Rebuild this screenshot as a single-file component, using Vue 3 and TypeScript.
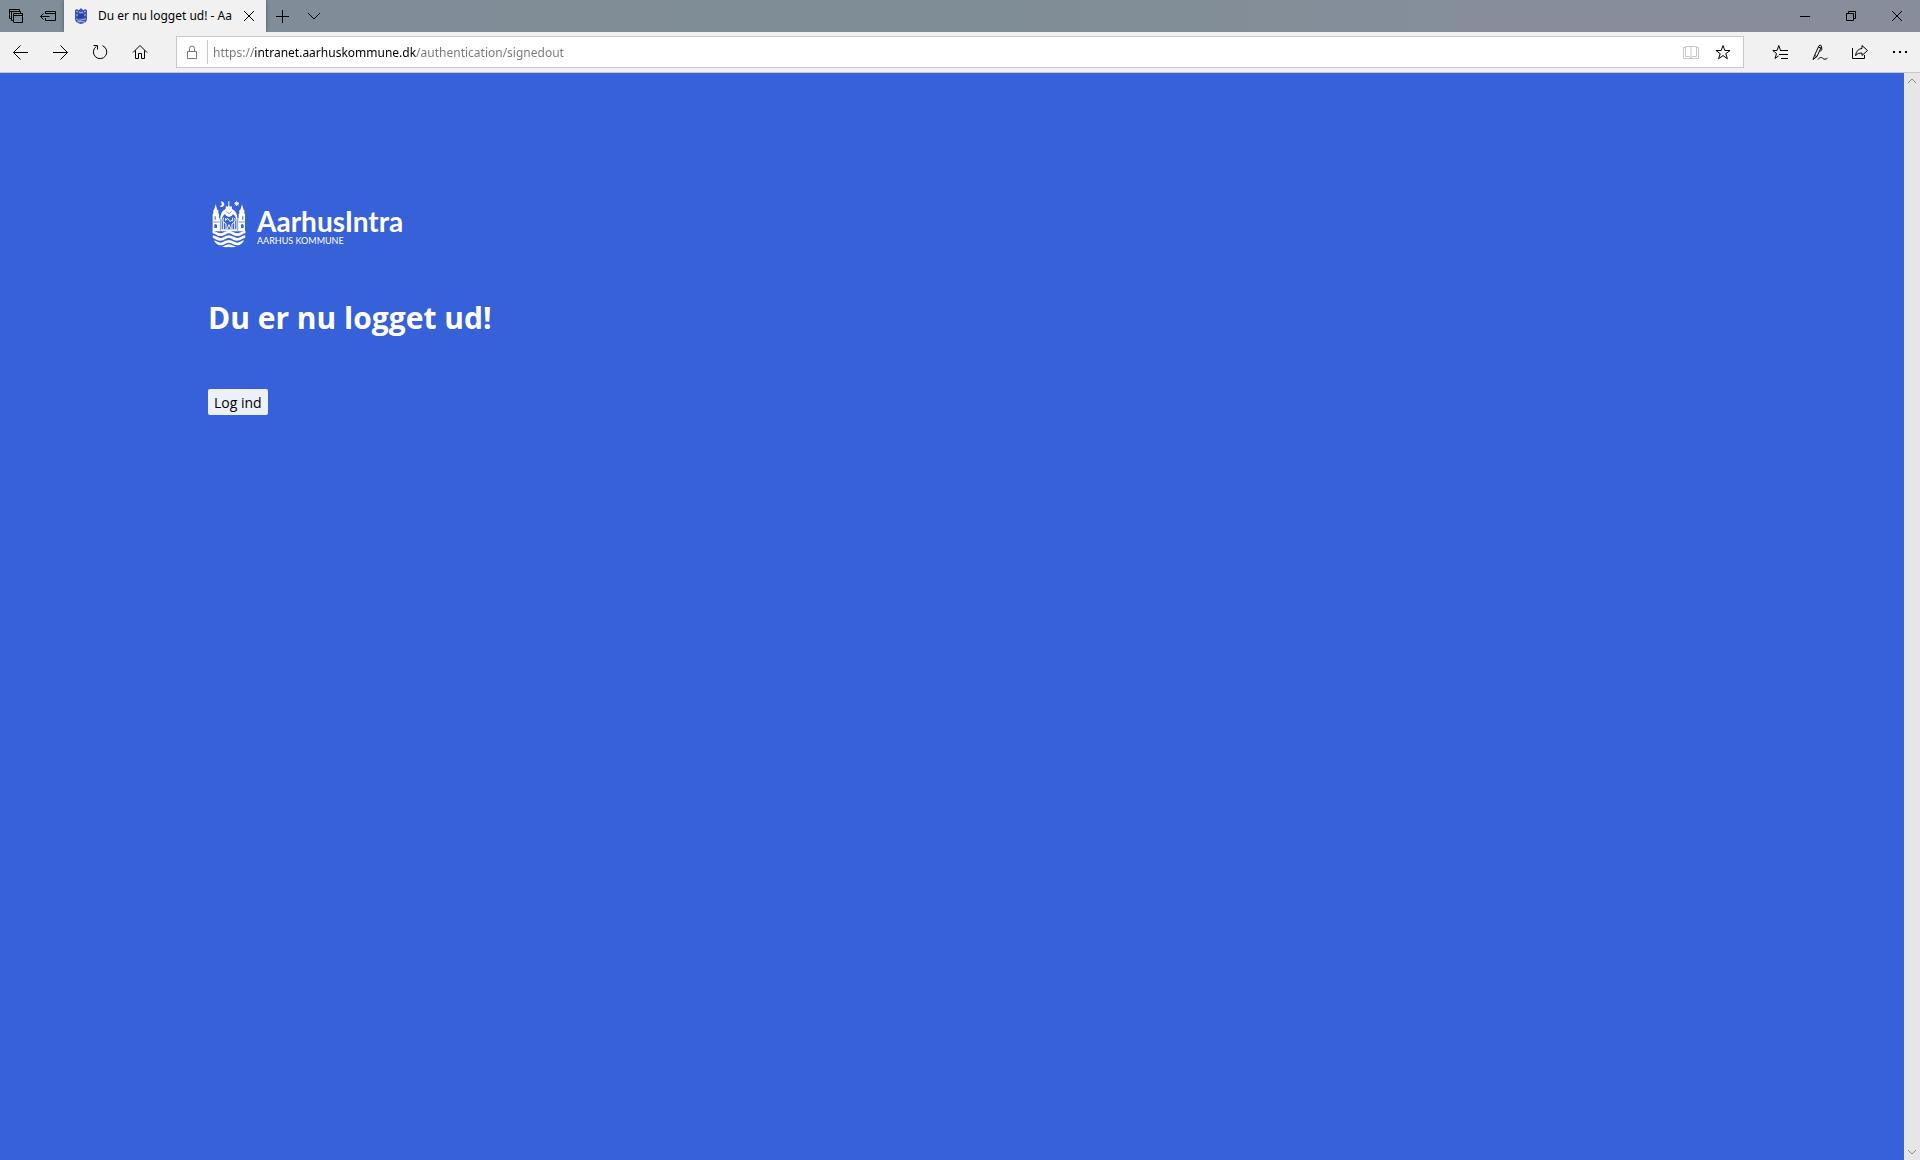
<script setup lang="ts">
import { ref } from 'vue'

const address = ref('https://intranet.aarhuskommune.dk/authentication/signedout')
const tabTitle = 'Du er nu logget ud! - AarhusIntra'
</script>

<template>
  <div class="browser">
    <header class="titlebar">
      <button class="tool" aria-label="Tabs you've set aside">
        <svg width="16" height="16" viewBox="0 0 16 16">
          <path d="M3.500 10.500h-2v-9h10v2M1.500 3.500h10M5.500 12.500h-2v-9h9v2" />
          <path d="M5.500 5.500h9v9h-9zM5.500 7.500h9" />
        </svg>
      </button>
      <button class="tool" aria-label="Set these tabs aside">
        <svg width="16" height="16" viewBox="0 0 16 16">
          <path d="M5.500 6V3.500h10v9h-10V10M5.500 5.500h10M.5 8.500h9M3.500 5.500l-3 3 3 3" />
        </svg>
      </button>
      <div class="tab">
        <svg class="favicon" width="14" height="16" viewBox="0 0 14 16">
          <path d="M1 2l2-1 1 1h1l2-2 2 2h1l1-1 2 1v9q0 4-6 5-6-1-6-5z" fill="#3b55b5" />
          <path d="M2 3l2 1M10 4l2-1M5 4l2 1 2-1M2 7h2M10 7h2M2 11q2 2 5 1t5-1M3 14q4-1 8 0" stroke="#aebbe6" />
          <path d="M4 6h6v4H4z" fill="#2741a2" />
        </svg>
        <span class="tab-title">{{ tabTitle }}</span>
        <button class="tab-close" aria-label="Close tab">
          <svg width="12" height="12" viewBox="0 0 12 12"><path d="M1 1l10 10M11 1L1 11" /></svg>
        </button>
      </div>
      <button class="tool" aria-label="New tab">
        <svg width="14" height="14" viewBox="0 0 14 14"><path d="M7.500 1v13M1 7.500h13" /></svg>
      </button>
      <button class="tool" aria-label="Show tab previews">
        <svg width="14" height="14" viewBox="0 0 14 14"><path d="M1 4l6 6 6-6" /></svg>
      </button>
      <div class="window-controls">
        <button aria-label="Minimize">
          <svg width="10" height="10" viewBox="0 0 10 10"><path d="M0 5.500h10" /></svg>
        </button>
        <button aria-label="Restore">
          <svg width="10" height="10" viewBox="0 0 10 10"><path d="M.5 2.500h7v7h-7zM2.500 2.500v-2h7v7h-2" /></svg>
        </button>
        <button aria-label="Close">
          <svg width="10" height="10" viewBox="0 0 10 10"><path d="M0 0l10 10M10 0L0 10" /></svg>
        </button>
      </div>
    </header>

    <nav class="toolbar" aria-label="Browser">
      <button class="nav" aria-label="Back">
        <svg width="16" height="16" viewBox="0 0 16 16"><path d="M1.500 8.500H16M8.500 1.500l-7 7 7 7" /></svg>
      </button>
      <button class="nav" aria-label="Forward">
        <svg width="16" height="16" viewBox="0 0 16 16"><path d="M1 8.500h14.500M8.500 1.500l7 7-7 7" /></svg>
      </button>
      <button class="nav" aria-label="Refresh">
        <svg width="16" height="16" viewBox="0 0 16 16"><path d="M10.500 1.700A6.700 6.700 0 1 1 4.500 2.300M1.500 1.500h4v4" /></svg>
      </button>
      <button class="nav" aria-label="Home">
        <svg width="16" height="16" viewBox="0 0 16 16"><path d="M1 8.500l7-7 7 7M3.500 6.500v8h3v-5h3v5h3v-8" /></svg>
      </button>
      <form class="address" @submit.prevent>
        <button class="lock" type="button" aria-label="Website identification">
          <svg width="12" height="14" viewBox="0 0 12 14"><path d="M1.500 6.500h9v7h-9zM3.500 6.500V3.500a2.500 2.500 0 0 1 5 0v3" /></svg>
        </button>
        <input v-model="address" type="text" aria-label="Address" spellcheck="false" />
        <button class="field-tool faded" type="button" aria-label="Reading view">
          <svg width="16" height="16" viewBox="0 0 16 16">
            <path d="M8 2.500H2.500v10h4L8 13.500l1.500-1h4v-10H8zM8 2v12M2.500 3.500h-2v11h15v-11h-2" />
          </svg>
        </button>
        <button class="field-tool" type="button" aria-label="Add to favorites">
          <svg width="16" height="16" viewBox="0 0 16 16">
            <path d="M8 1.500l1.800 5h5.200l-4.200 3.200 1.600 5L8 11.600l-4.400 3.100 1.600-5L1 6.500h5.200z" />
          </svg>
        </button>
      </form>
      <button class="nav" aria-label="Favorites">
        <svg width="16" height="16" viewBox="0 0 16 16">
          <path d="M10 6.500H8.500l-1.700-5-1.800 5H.8l3.700 3-1.500 5 3.700-2.700M8 6.500h8M7 10.500h9M9 14.500h7" />
        </svg>
      </button>
      <button class="nav" aria-label="Add notes">
        <svg width="16" height="16" viewBox="0 0 16 16">
          <path d="M1 15.500l1.500-4L7 1.700q2-1.700 2.500.8L5 12.500zM6.500 3l2.500 1.200M9.500 2.500l.3 3-1.500 2M2.500 11.500L5 12.500M6 15.500c2-3 4-2 5-1s3 1 4.500-.5" />
        </svg>
      </button>
      <button class="nav" aria-label="Share">
        <svg width="16" height="16" viewBox="0 0 16 16">
          <path d="M.5 4v10.500h12V11M10 1.500l5.500 5-5.500 5V9q-4-.5-6.500 2.500Q4.500 5 10 4.500z" />
        </svg>
      </button>
      <button class="nav" aria-label="Settings and more">
        <svg width="16" height="16" viewBox="0 0 16 16"><path d="M1 8h2M7 8h2M13 8h2" stroke-width="2" /></svg>
      </button>
    </nav>

    <div class="viewport">
      <main>
        <div class="brand">
          <svg class="crest" width="34" height="48" viewBox="0 0 102 144">
            <clipPath id="shield"><path d="M1 86h100v14q-1 42-50 43Q2 142 1 100z" /></clipPath>
            <path fill="#fff" d="M2 94V41h2V30h2l5-17 5 17h3v11h2v14h4q1-17 10-24l6-4v-6l3-3 3 3 2-4V4h3v13l2 4 3-3 3 3v6l6 4q9 7 10 24h4V41h2V30h3l5-17 5 17h2v11h2v53z" />
            <path class="cutout" d="M29 88V58q2-11 10-16 4 9 12 9t12-9q8 5 10 16v30zM8 49h3v10H8zM91 49h3v10h-3zM7 75q4-6 8 0v9H7zM87 75q4-6 8 0v9h-8z" />
            <path class="groove" d="M4 66h18M80 66h18M43 34l8 7 8-7M25 56v36M77 56v36" stroke-width="2" />
            <path class="line" d="M34 88V66q-3-7 1-13M34 66l8 5v17M41 62v-8M41 60q8-9 10 0t10 0M62 53v11M60 88V72l8-6v22M68 66q3-6 0-12M45 87l6-13 6 13" stroke-width="3" />
            <path d="M27 5a8 8 0 1 1-4 13q10 0 4-13z" fill="#fff" />
            <path class="line" d="M74 4v14M67 11h14M69 6l10 10M79 6L69 16" stroke-width="3" />
            <g clip-path="url(#shield)">
              <path class="line" d="M-12 100q12-8 25 0t25 0 25 0 25 0 25 0M-12 114q12-8 25 0t25 0 25 0 25 0 25 0M-12 128q12-8 25 0t25 0 25 0 25 0 25 0M-12 141q12-8 25 0t25 0 25 0 25 0 25 0" stroke-width="8" />
            </g>
          </svg>
          <div class="brand-text">
            <span class="brand-name">AarhusIntra</span>
            <span class="brand-sub">AARHUS KOMMUNE</span>
          </div>
        </div>
        <h1>Du er nu logget ud!</h1>
        <button class="login">Log ind</button>
      </main>
      <div class="scrollbar" aria-hidden="true">
        <svg width="10" height="6" viewBox="0 0 10 6"><path d="M1 5l4-4 4 4" /></svg>
        <svg width="10" height="6" viewBox="0 0 10 6"><path d="M1 1l4 4 4-4" /></svg>
      </div>
    </div>
  </div>
</template>

<style>
body {
  margin: 0;
}
</style>

<style scoped>
.browser {
  display: flex;
  flex-direction: column;
  min-height: 100vh;
  font-family: "Noto Sans", sans-serif;
  font-size: 12px;
}

svg {
  display: block;
  flex: none;
  fill: none;
  stroke: #000;
}

.favicon path,
.crest path {
  stroke: none;
}

.favicon path[stroke] {
  stroke: #aebbe6;
}

.crest .line {
  stroke: #fff;
}

.crest .groove {
  stroke: #3761d9;
}

.crest .cutout {
  fill: #3761d9;
}

button {
  display: flex;
  align-items: center;
  justify-content: center;
  flex: none;
  padding: 0;
  border: 0;
  background: none;
  font: inherit;
}

.titlebar {
  display: flex;
  height: 32px;
  background: linear-gradient(90deg, #818d99, #7f8d96 50%, #868e9b 80%);
}

.tool {
  width: 32px;
}

.tab {
  display: flex;
  align-items: center;
  box-sizing: border-box;
  width: 202px;
  padding-left: 10px;
  background: #f1f1f1;
  box-shadow: 0 0 4px rgb(0 0 0 / 40%);
}

.tab-title {
  flex: 1;
  margin-left: 10px;
  padding-bottom: 2px;
  overflow: hidden;
  white-space: nowrap;
}

.tab-close {
  width: 34px;
  height: 32px;
}

.window-controls {
  display: flex;
  margin-left: auto;
}

.window-controls button {
  width: 46px;
}

.toolbar {
  display: flex;
  align-items: center;
  height: 40px;
  border-bottom: 1px solid #c8c8c8;
  background: #f1f1f1;
}

.nav {
  width: 40px;
  height: 40px;
}

.address {
  display: flex;
  flex: 1;
  align-items: center;
  box-sizing: border-box;
  height: 32px;
  margin: 0 16px;
  padding-right: 4px;
  border: 1px solid #c8c8c8;
  background: #fff;
}

.lock {
  width: 31px;
  height: 24px;
  border-right: 1px solid #c8c8c8;
}

.lock svg {
  stroke: #767676;
}

/* The host part of the address is darker than the scheme and the path. */
.address input {
  flex: 1;
  min-width: 0;
  margin-left: 5px;
  padding: 2px 0 0;
  border: 0;
  outline: 0;
  background: linear-gradient(90deg, #767676 42px, #000 42px, #000 203px, #767676 203px);
  background-clip: text;
  color: transparent;
  font: inherit;
  line-height: 20px;
}

.field-tool {
  width: 32px;
  height: 30px;
}

.faded svg {
  stroke: #c8c8c8;
}

.viewport {
  display: flex;
  flex: 1;
}

main {
  flex: 1;
  padding: 127px 208px;
  background: #3761d9;
  color: #fff;
  font-family: "Open Sans", sans-serif;
}

.brand {
  display: flex;
  gap: 11px;
  padding-left: 4px;
}

.brand-text {
  display: flex;
  flex-direction: column;
  padding-top: 5px;
  font-family: Lato, sans-serif;
}

.brand-name {
  font-size: 28px;
  font-weight: 700;
  line-height: 32px;
}

.brand-sub {
  font-size: 9px;
  line-height: 8px;
}

h1 {
  margin: 49px 0 50px;
  font-size: 30px;
  font-weight: 700;
  line-height: 42px;
}

.login {
  height: 26px;
  padding: 0 6px;
  border-radius: 2px;
  background: #ecf0fb;
  color: #000;
  font-size: 14px;
}

.scrollbar {
  display: flex;
  flex-direction: column;
  justify-content: space-between;
  align-items: center;
  box-sizing: border-box;
  width: 16px;
  padding: 5px 0;
  background: #e6e6e6;
}

.scrollbar svg {
  stroke: #888;
}
</style>
